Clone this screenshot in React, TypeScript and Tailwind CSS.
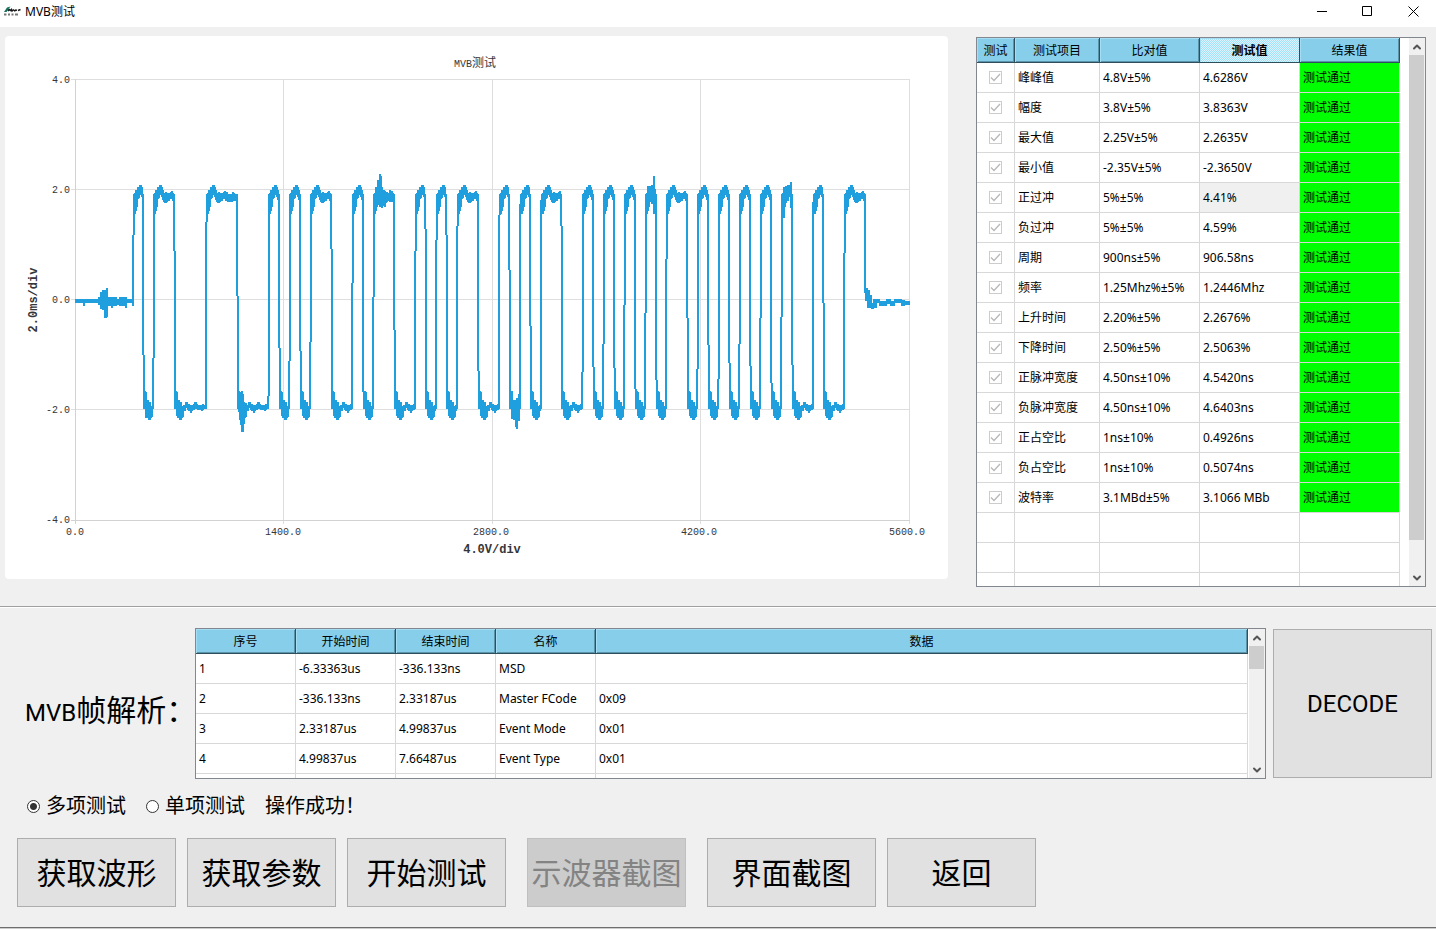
import { ChevronDown, ChevronUp } from 'lucide-react'
import clsx from 'clsx'
import { useState } from 'react'

type Span = [top: number, bottom: number]

const measurements = [
  ['峰峰值', '4.8V±5%', '4.6286V'],
  ['幅度', '3.8V±5%', '3.8363V'],
  ['最大值', '2.25V±5%', '2.2635V'],
  ['最小值', '-2.35V±5%', '-2.3650V'],
  ['正过冲', '5%±5%', '4.41%'],
  ['负过冲', '5%±5%', '4.59%'],
  ['周期', '900ns±5%', '906.58ns'],
  ['频率', '1.25Mhz%±5%', '1.2446Mhz'],
  ['上升时间', '2.20%±5%', '2.2676%'],
  ['下降时间', '2.50%±5%', '2.5063%'],
  ['正脉冲宽度', '4.50ns±10%', '4.5420ns'],
  ['负脉冲宽度', '4.50ns±10%', '4.6403ns'],
  ['正占空比', '1ns±10%', '0.4926ns'],
  ['负占空比', '1ns±10%', '0.5074ns'],
  ['波特率', '3.1MBd±5%', '3.1066 MBb']
]

const frames = [
  ['1', '-6.33363us', '-336.133ns', 'MSD', ''],
  ['2', '-336.133ns', '2.33187us', 'Master FCode', '0x09'],
  ['3', '2.33187us', '4.99837us', 'Event Mode', '0x01'],
  ['4', '4.99837us', '7.66487us', 'Event Type', '0x01'],
  ['', '', '', '', '']
]

// signal edges, rising first: [x, y where the sample column changes]
const edges: [number, number][] = [
  [133, 235], [143, 355], [153, 358], [174, 251], [206, 222], [237, 296],
  [268, 396], [279, 348], [289, 361], [300, 351], [310, 342], [331, 249],
  [352, 283], [363, 392], [373, 297], [394, 330], [415, 251], [425, 229],
  [436, 240], [446, 235], [457, 226], [478, 371], [499, 215], [509, 270],
  [520, 204], [530, 326], [541, 200], [561, 226], [582, 372], [593, 367],
  [603, 344], [614, 368], [624, 305], [635, 389], [645, 313], [656, 380],
  [666, 259], [687, 318], [697, 369], [708, 345], [718, 379], [729, 363],
  [739, 344], [750, 366], [760, 318], [771, 383], [781, 317], [792, 365],
  [813, 202], [823, 303], [844, 253], [865, 293]
]

const highRipple: Span[] = [
  [193, 214], [190, 211], [190, 207], [187, 199], [187, 198], [185, 195],
  [185, 195], [187, 197], [190, 200], [193, 202], [194, 203], [192, 203],
  [193, 202], [195, 200], [193, 201], [193, 199], [192, 199], [191, 199],
  [193, 201], [192, 201], [194, 202], [194, 201], [194, 202], [194, 201],
  [194, 202], [192, 201], [193, 200], [194, 201], [194, 201], [190, 201]
]

const lowRipple: Span[] = [
  [391, 409], [392, 416], [400, 418], [400, 417], [403, 420], [402, 420],
  [409, 418], [406, 417], [405, 411], [406, 411], [402, 408], [402, 408],
  [404, 410], [404, 411], [406, 411], [405, 413], [406, 411], [405, 410],
  [404, 410], [402, 409], [402, 409], [404, 409], [405, 410], [405, 409],
  [406, 410], [405, 410], [405, 411], [404, 410], [405, 409], [405, 409]
]

// noise bursts that stand out of the regular ringing
const bursts: [number, number, number][] = [
  [144, 391, 409], [146, 394, 418],
  [239, 394, 412], [240, 398, 420], [241, 393, 425], [242, 391, 432], [243, 394, 432],
  [244, 402, 424], [246, 403, 416],
  [376, 187, 208], [378, 180, 205], [380, 174, 207], [381, 176, 207], [382, 188, 208],
  [384, 190, 206], [385, 191, 207], [387, 192, 202], [390, 190, 202], [392, 192, 202],
  [512, 391, 419], [514, 400, 420], [516, 400, 427], [517, 398, 429], [519, 394, 421],
  [648, 186, 211], [650, 186, 202], [652, 186, 204], [654, 176, 214], [655, 189, 204],
  [784, 187, 218], [786, 186, 203], [788, 186, 201], [791, 182, 208]
]

const idle: [number, number, number, number][] = [
  [76, 99, 299, 303], [84, 85, 300, 306], [99, 101, 297, 305], [101, 103, 292, 309],
  [103, 105, 290, 310], [105, 107, 290, 318], [107, 108, 288, 317], [108, 110, 297, 306],
  [110, 117, 297, 306], [112, 113, 298, 308], [117, 120, 299, 305], [120, 127, 297, 306],
  [126, 127, 298, 308], [127, 133, 299, 303], [133, 134, 299, 306], [866, 868, 288, 301],
  [868, 870, 290, 308], [870, 872, 295, 308], [872, 874, 303, 309], [874, 877, 299, 308],
  [877, 880, 299, 303], [880, 887, 301, 306], [887, 891, 299, 304], [891, 895, 301, 306],
  [895, 902, 299, 303], [902, 905, 300, 306], [905, 910, 301, 305]
]

const bar = (x: number, top: number, bottom: number) => `M${x} ${top}V${bottom}`

const buildTrace = () => {
  const parts: string[] = []

  edges.forEach(([x, split], i) => {
    const rising = i % 2 === 0
    const last = i === edges.length - 1
    const low = i === 0 ? 303 : last ? 300 : 409
    const high = 194

    parts.push(
      rising ? bar(x, split, low) : bar(x, high, split),
      rising ? bar(x + 1, high, split) : bar(x + 1, split, low)
    )
    if (last) return

    const ripple = rising ? highRipple : lowRipple
    const width = edges[i + 1][0] - x - 2
    for (let n = 0; n < width; n++) {
      const [top, bottom] = ripple[Math.min(n, ripple.length - 1)]
      parts.push(bar(x + 2 + n, top, bottom))
    }
  })

  bursts.forEach(([x, top, bottom]) => parts.push(bar(x, top, bottom)))
  idle.forEach(([from, to, top, bottom]) => {
    for (let x = from; x < to; x++) parts.push(bar(x, top, bottom))
  })

  return parts.join('')
}

const trace = buildTrace()

const Logo = () => (
  <svg viewBox="0 0 17 11" className="h-[11px] w-[17px]" aria-hidden="true">
    <path d="M0 6 3 1.500 6.500 .5 4.500 3 6 4 3.500 4.500 2.500 6Z" fill="#12705c" />
    <path
      d="M4 5 6 3M6 5 7.500 3.500 8 5 10 3.500M10 5 12 4 12.500 5M14 4.500 16.500 3.500"
      fill="none"
      stroke="#1b1b1b"
      strokeWidth="1.500"
    />
    <path d="M0 8.500H2.500M4 8.500H6M7.500 8.500H9.500M11 8.500H14" stroke="#777" strokeWidth="2" />
  </svg>
)

const TitleBar = () => (
  <header className="flex h-[27px] items-center justify-between bg-white">
    <div className="flex items-center gap-1 pb-1 pl-1">
      <Logo />
      <h1 className="text-[12px] leading-4">MVB测试</h1>
    </div>
    <div className="flex pb-1">
      <button aria-label="最小化" className="flex h-5 w-[46px] items-center justify-center">
        <svg viewBox="0 0 11 11" className="size-[11px]" stroke="#000" shapeRendering="crispEdges">
          <path d="M0 5.500H10" />
        </svg>
      </button>
      <button aria-label="最大化" className="flex h-5 w-[45px] items-center justify-center">
        <svg viewBox="0 0 11 11" className="size-[11px]" stroke="#000" fill="none">
          <path d="M.5 .5H9.500V9.500H.5Z" />
        </svg>
      </button>
      <button aria-label="关闭" className="flex h-5 w-[46px] items-center justify-center">
        <svg viewBox="0 0 11 11" className="size-[11px]" stroke="#000">
          <path d="M.5 .5 10.500 10.500M10.500 .5 .5 10.500" />
        </svg>
      </button>
    </div>
  </header>
)

const WaveChart = () => (
  <section className="min-w-0 flex-1 self-start rounded bg-white">
    <svg viewBox="5 36 943 543" className="block w-full" role="img" aria-label="MVB测试">
      <g stroke="#dedede" shapeRendering="crispEdges">
        {[79.5, 189.5, 299.5, 409.5].map((y) => (
          <path key={y} d={`M71 ${y}H909`} />
        ))}
        {[283.5, 492.5, 700.5, 909.5].map((x) => (
          <path key={x} d={`M${x} 79V524`} />
        ))}
        <path d="M71 520.5H910M75.5 79V524" stroke="#d2d2d2" />
      </g>
      <path d={trace} stroke="#209fdf" strokeWidth="2" shapeRendering="crispEdges" />
      <g
        fill="#35363a"
        textAnchor="middle"
        className="font-['Liberation_Mono','Noto_Sans_CJK_SC',monospace] text-[10px]"
      >
        <text x="475" y="67">
          MVB<tspan className="text-[12px]">测试</tspan>
        </text>
        {['0.0', '1400.0', '2800.0', '4200.0', '5600.0'].map((label, i) => (
          <text key={label} x={75 + i * 208} y="535">
            {label}
          </text>
        ))}
        {['4.0', '2.0', '0.0', '-2.0', '-4.0'].map((label, i) => (
          <text key={label} x="70" y={83 + i * 110} textAnchor="end">
            {label}
          </text>
        ))}
        <g className="text-[12px] font-bold">
          <text x="492" y="553">4.0V/div</text>
          <text transform="translate(37 300) rotate(-90)">2.0ms/div</text>
        </g>
      </g>
    </svg>
  </section>
)

const ScrollBar = ({ thumb }: { thumb: string }) => (
  <div className="flex w-4 shrink-0 flex-col bg-[#f0f0f0]">
    <button aria-label="向上滚动" className="flex h-[17px] items-center justify-center">
      <ChevronUp size={12} strokeWidth={4} color="#555" />
    </button>
    <div className="min-h-0 flex-1">
      <div className={clsx('mr-px bg-[#cdcdcd]', thumb)} />
    </div>
    <button aria-label="向下滚动" className="flex h-[17px] items-center justify-center">
      <ChevronDown size={12} strokeWidth={4} color="#555" />
    </button>
  </div>
)

const HeadCell = ({ children, active }: { children: string; active?: boolean }) => (
  <th
    scope="col"
    className={clsx(
      'h-[25px] border-r border-b border-[#2f4f5f] p-0 pt-[2px] text-center',
      active
        ? 'bg-[repeating-conic-gradient(#a5e0fa_0_25%,#dcf4ff_0_50%)] bg-[length:2px_2px] font-bold inset-shadow-[1px_1px_0_#a5ddf5]'
        : 'bg-[#87ceeb] font-normal shadow-[inset_1px_1px_0_#a5ddf5,inset_-1px_-1px_0_#5b93a9]'
    )}
  >
    {children}
  </th>
)

const cell = 'h-[30px] border-r border-b border-[#d8d8d8] px-[3px] py-0 whitespace-nowrap'

const RowCheck = ({ label }: { label: string }) => (
  <div className="grid place-items-center">
    <input
      type="checkbox"
      aria-label={label}
      checked
      disabled
      readOnly
      className="col-start-1 row-start-1 size-[13px] appearance-none border border-[#cccccc] bg-white"
    />
    <svg
      viewBox="0 0 13 13"
      className="pointer-events-none col-start-1 row-start-1 size-[13px]"
      aria-hidden="true"
    >
      <path d="M2 6.500 5 9.500 11 3" fill="none" stroke="#b8b8b8" strokeWidth="1.300" />
    </svg>
  </div>
)

const ResultTable = () => (
  <section className="flex h-[550px] w-[450px] shrink-0 overflow-hidden border border-[#828790] bg-white">
    <div className="min-w-0 flex-1 overflow-hidden pr-[9px]">
      <table className="w-full table-fixed border-separate border-spacing-0">
        <colgroup>
          <col className="w-[38px]" />
          <col className="w-[85px]" />
          <col className="w-[100px]" />
          <col className="w-[100px]" />
          <col />
        </colgroup>
        <thead>
          <tr>
            <HeadCell>测试</HeadCell>
            <HeadCell>测试项目</HeadCell>
            <HeadCell>比对值</HeadCell>
            <HeadCell active>测试值</HeadCell>
            <HeadCell>结果值</HeadCell>
          </tr>
        </thead>
        <tbody>
          {measurements.map(([name, expected, actual]) => (
            <tr key={name}>
              <td className={cell}>
                <RowCheck label={name} />
              </td>
              <td className={cell}>{name}</td>
              <td className={cell}>{expected}</td>
              <td className={clsx(cell, name === '正过冲' && 'bg-[#f0f0f0]')}>{actual}</td>
              <td className={clsx(cell, 'bg-[#00ff00] bg-clip-padding')}>测试通过</td>
            </tr>
          ))}
          {[1, 2, 3].map((row) => (
            <tr key={row}>
              {[1, 2, 3, 4, 5].map((col) => (
                <td key={col} className={cell} />
              ))}
            </tr>
          ))}
        </tbody>
      </table>
    </div>
    <ScrollBar thumb="h-[485px]" />
  </section>
)

const FrameTable = () => (
  <div className="flex h-[151px] min-w-0 flex-1 overflow-hidden border border-[#828790] bg-white">
    <div className="min-w-0 flex-1 overflow-hidden pr-px">
      <table className="w-full table-fixed border-separate border-spacing-0">
        <colgroup>
          <col className="w-[100px]" />
          <col className="w-[100px]" />
          <col className="w-[100px]" />
          <col className="w-[100px]" />
          <col />
        </colgroup>
        <thead>
          <tr>
            <HeadCell>序号</HeadCell>
            <HeadCell>开始时间</HeadCell>
            <HeadCell>结束时间</HeadCell>
            <HeadCell>名称</HeadCell>
            <HeadCell>数据</HeadCell>
          </tr>
        </thead>
        <tbody>
          {frames.map((frame, row) => (
            <tr key={row}>
              {frame.map((value, col) => (
                <td key={col} className={cell}>
                  {value}
                </td>
              ))}
            </tr>
          ))}
        </tbody>
      </table>
    </div>
    <ScrollBar thumb="h-[23px]" />
  </div>
)

const bigButton =
  'border border-[#adadad] bg-[#e1e1e1] whitespace-nowrap hover:border-[#0078d7] hover:bg-[#e5f1fb] disabled:border-[#bfbfbf] disabled:bg-[#cccccc] disabled:text-[#838383]'

const actionButton = 'h-[69px] text-[30px] leading-10'

const ModePicker = () => {
  const [mode, setMode] = useState('multi')

  return (
    <div className="flex items-center pt-[13px] pl-[27px] text-[20px] leading-7">
      {[
        { value: 'multi', label: '多项测试' },
        { value: 'single', label: '单项测试' }
      ].map(({ value, label }) => (
        <label key={value} className="mr-5 flex items-center gap-[6px]">
          <input
            type="radio"
            name="mode"
            value={value}
            checked={mode === value}
            onChange={() => setMode(value)}
            className="size-[13px] appearance-none rounded-full border border-[#333] bg-white checked:bg-[radial-gradient(#333_0_3px,#fff_4px)]"
          />
          {label}
        </label>
      ))}
      <output>操作成功！</output>
    </div>
  )
}

export default function App() {
  return (
    <div className="min-h-screen bg-[#f0f0f0] font-['Noto_Sans','Noto_Sans_CJK_SC',sans-serif] text-[12px] leading-4 text-black">
      <TitleBar />
      <main>
        <div className="flex gap-7 pt-[9px] pr-[10px] pb-[19px] pl-[5px]">
          <WaveChart />
          <div className="pt-px">
            <ResultTable />
          </div>
        </div>
        <hr className="h-[2px] border-t border-b border-t-[#a0a0a0] border-b-white" />
        <div className="flex items-start pt-5 pr-1">
          <h2 className="w-[195px] shrink-0 self-center pt-4 pl-[25px] text-[30px] leading-10 whitespace-nowrap">
            <span className="font-['Roboto',sans-serif] text-[24px]">MVB</span>帧解析：
          </h2>
          <FrameTable />
          <button
            className={clsx(
              bigButton,
              "mt-px ml-[7px] h-[149px] w-[159px] shrink-0 font-['Roboto',sans-serif] text-[24px] leading-10"
            )}
          >
            DECODE
          </button>
        </div>
        <ModePicker />
        <div className="flex pt-[18px] pb-5 pl-[17px]">
          <button className={clsx(bigButton, actionButton, 'mr-[11px] w-[159px]')}>获取波形</button>
          <button className={clsx(bigButton, actionButton, 'mr-[11px] w-[149px]')}>获取参数</button>
          <button className={clsx(bigButton, actionButton, 'mr-[21px] w-[159px]')}>开始测试</button>
          <button disabled className={clsx(bigButton, actionButton, 'mr-[21px] w-[159px]')}>
            示波器截图
          </button>
          <button className={clsx(bigButton, actionButton, 'mr-[11px] w-[169px]')}>界面截图</button>
          <button className={clsx(bigButton, actionButton, 'w-[149px]')}>返回</button>
        </div>
      </main>
      <footer className="h-[2px] border-t border-[#6e6e6e] bg-[#cccccc]" />
    </div>
  )
}
